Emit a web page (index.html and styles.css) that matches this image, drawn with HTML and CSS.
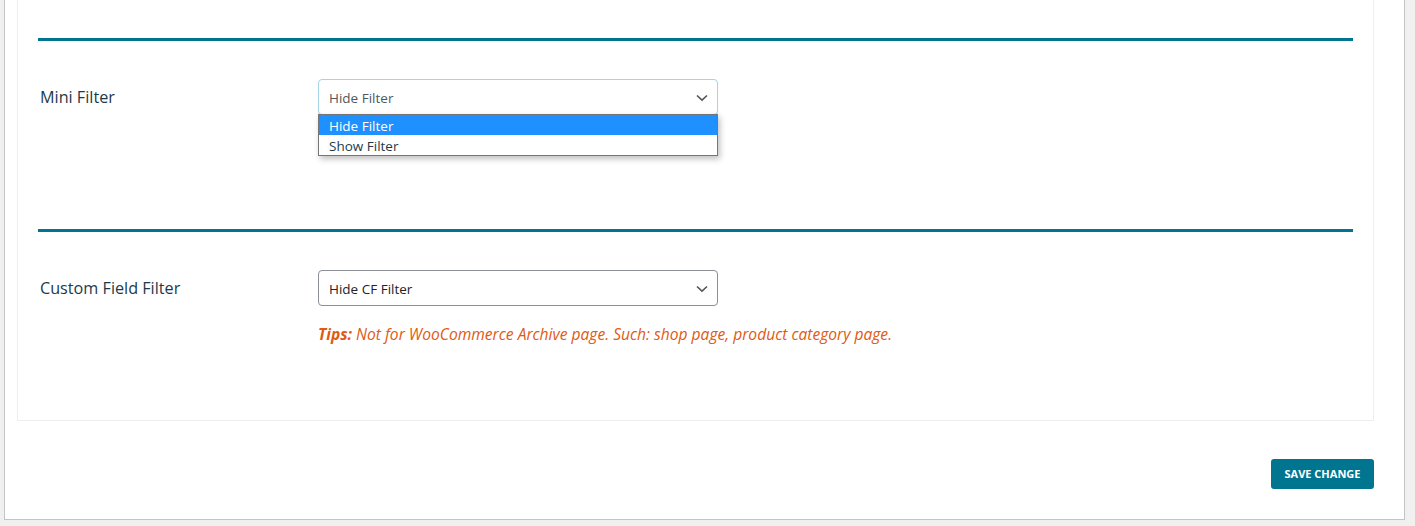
FILE: index.html
```html
<!DOCTYPE html>
<html lang="en">
<head>
<meta charset="utf-8">
<title>Filter Settings</title>
<link rel="stylesheet" href="styles.css">
</head>
<body>
<div class="panel">
  <div class="box">
    <section class="section first">
      <div class="row">
        <div class="label">Mini Filter</div>
        <div class="field">
          <div class="select focused">
            <span class="value">Hide Filter</span>
            <svg class="chev" width="12" height="8" viewBox="0 0 12 8"><path d="M1 1.5 L6 6.2 L11 1.5" fill="none" stroke="#50575e" stroke-width="1.6"/></svg>
          </div>
          <ul class="options">
            <li class="opt active">Hide Filter</li>
            <li class="opt">Show Filter</li>
          </ul>
        </div>
      </div>
    </section>
    <section class="section">
      <div class="row">
        <div class="label">Custom Field Filter</div>
        <div class="field">
          <div class="select">
            <span class="value dark">Hide CF Filter</span>
            <svg class="chev" width="12" height="8" viewBox="0 0 12 8"><path d="M1 1.5 L6 6.2 L11 1.5" fill="none" stroke="#50575e" stroke-width="1.6"/></svg>
          </div>
          <p class="tips"><b>Tips:</b> Not for WooCommerce Archive page. Such: shop page, product category page.</p>
        </div>
      </div>
    </section>
  </div>
  <div class="actions">
    <button class="save">SAVE CHANGE</button>
  </div>
</div>
</body>
</html>
```

FILE: styles.css
```css
html, body {
  margin: 0;
  padding: 0;
}
body {
  background: #f0f0f1;
  font-family: "Open Sans", "Noto Sans", sans-serif;
  height: 526px;
  overflow: hidden;
}
.panel {
  margin-left: 4px;
  width: 1401px;
  height: 520px;
  box-sizing: border-box;
  background: #fff;
  border: 1px solid #c3c4c7;
  border-top: none;
  padding: 0 30px 0 12px;
}
.box {
  border: 1px solid #eeeeee;
  border-top: none;
  padding: 38px 20px 0 20px;
  height: 421px;
  box-sizing: border-box;
}
.section {
  border-top: 3px solid #00758f;
}
.section.first {
  height: 191px;
  box-sizing: border-box;
}
.row {
  display: grid;
  grid-template-columns: 280px 400px;
  padding-top: 38px;
}
.label {
  padding-left: 2px;
  line-height: 36px;
  font-size: 16.2px;
  color: #1d3a4b;
}
.field {
  position: relative;
}
.select {
  height: 36px;
  box-sizing: border-box;
  border: 1px solid #8c8f94;
  border-radius: 4px;
  display: flex;
  align-items: center;
  justify-content: space-between;
  padding: 1px 9px 0 10px;
  background: #fff;
}
.select.focused {
  border-color: #a7d3e6;
  box-shadow: 0 1px 2px rgba(0,0,0,0.06);
}
.value {
  font-size: 13.5px;
  color: #50575e;
}
.value.dark {
  color: #1d2327;
}
.chev {
  display: block;
}
.options {
  position: absolute;
  top: 35px;
  left: 0;
  width: 400px;
  margin: 0;
  padding: 0;
  list-style: none;
  box-sizing: border-box;
  border: 1px solid #767676;
  background: #fff;
  box-shadow: 2px 3px 6px rgba(0,0,0,0.25);
}
.opt {
  height: 20px;
  line-height: 22px;
  padding-left: 10px;
  font-size: 13.5px;
  color: #1d3a4b;
}
.opt.active {
  background: #1e90ff;
  color: #fff;
}
.tips {
  margin: 18px 0 0 0;
  font-size: 15.6px;
  line-height: 20px;
  font-style: italic;
  color: #e05a12;
  white-space: nowrap;
}
.tips b {
  font-weight: 700;
}
.actions {
  display: flex;
  justify-content: flex-end;
  padding-top: 38px;
}
.save {
  width: 103px;
  height: 30px;
  background: #00758f;
  color: #fff;
  border: none;
  border-radius: 3px;
  font-family: "Open Sans", sans-serif;
  font-weight: 700;
  font-size: 11px;
  padding: 0 0 2px 0;
}
```
